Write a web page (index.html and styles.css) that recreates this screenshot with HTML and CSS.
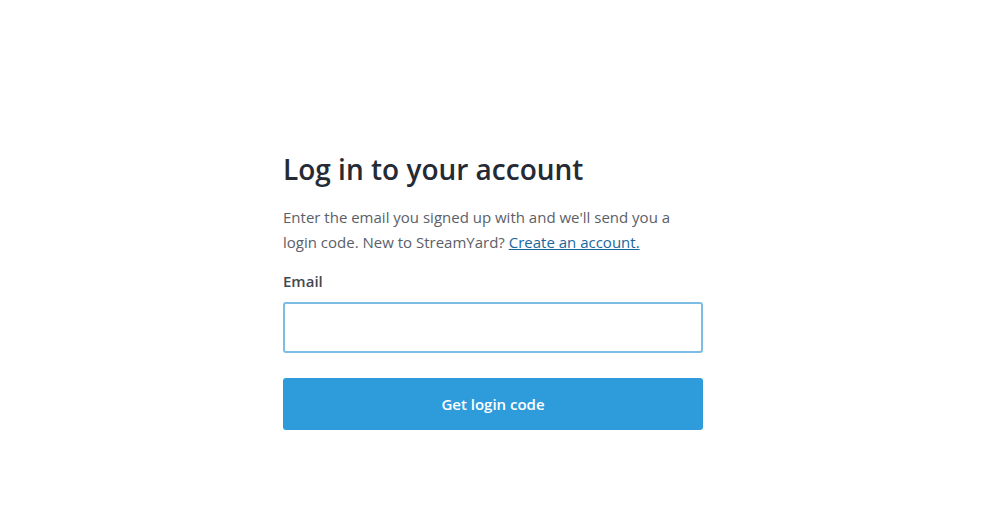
FILE: index.html
```html
<!DOCTYPE html>
<html lang="en">
<head>
<meta charset="utf-8">
<title>Log in</title>
<link rel="stylesheet" href="styles.css">
</head>
<body>
<main class="page">
  <form class="card">
    <h1 class="title">Log in to your account</h1>
    <p class="lead">Enter the email you signed up with and we'll send you a login code. New to StreamYard? <a href="#" class="link">Create an account.</a></p>
    <label class="label" for="email">Email</label>
    <input class="input" id="email" type="email">
    <button class="btn" type="button">Get login code</button>
  </form>
</main>
</body>
</html>
```

FILE: styles.css
```css
* { box-sizing: border-box; }
html, body { margin: 0; padding: 0; background: #fff; }
body {
  font-family: "Open Sans", "Noto Sans", sans-serif;
  color: #1d2330;
}
.page {
  display: flex;
  justify-content: center;
  padding-top: 149px;
}
.card {
  width: 420px;
  display: flex;
  flex-direction: column;
}
.title {
  margin: 0;
  font-size: 28px;
  line-height: 40px;
  font-weight: 600;
  color: #252a35;
}
.lead {
  margin: 16px 0 0;
  font-size: 15px;
  line-height: 25px;
  color: #5b6068;
  padding-right: 20px;
}
.link { color: #19689c; text-decoration: underline; }
.label {
  margin-top: 16px;
  font-size: 15px;
  line-height: 20px;
  font-weight: 600;
  color: #43474f;
}
.input {
  margin-top: 11px;
  height: 51px;
  border: 2px solid #7bbde4;
  border-radius: 3px;
  font: inherit;
  padding: 0 12px;
  outline: none;
}
.btn {
  margin-top: 25px;
  height: 52px;
  border: 0;
  border-radius: 3px;
  background: #2e9cdb;
  color: #fff;
  font-family: inherit;
  font-size: 15px;
  font-weight: 600;
}
```
